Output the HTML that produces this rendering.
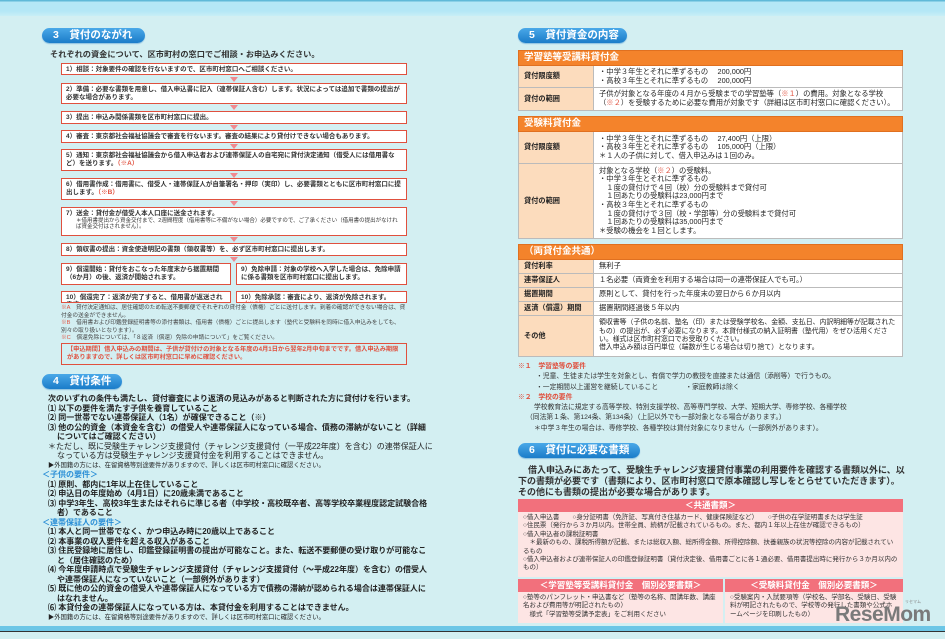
<!DOCTYPE html>
<html><head><meta charset="utf-8"><style>
*{margin:0;padding:0;box-sizing:border-box}
body{width:945px;height:639px;overflow:hidden;background:#d3eff2;font-family:"Liberation Sans","Noto Sans CJK JP",sans-serif;color:#222;position:relative}
.a{position:absolute}
.top{left:0;top:0;width:945px;height:16px;background:linear-gradient(#5fb9d8 0,#5fb9d8 1px,#b4e7f6 2px,#b4e7f6 11px,#c8eef6 16px)}
.bot{left:0;top:626px;width:945px;height:13px;background:linear-gradient(#6cc6e6 0,#6cc6e6 5px,#333 5px,#333 6px,#d3eff2 6px)}
.pill{height:15px;border-radius:8px;background:linear-gradient(#4aa8e8,#1a7cc9);color:#fff;font-weight:bold;font-size:10.5px;line-height:15px;padding-left:11px;box-shadow:0 1px 1px #8bbfe0}
.fb{left:61px;width:346px;border:1.3px solid #e0503e;background:#fff;font-size:6.5px;line-height:8px;padding:1.5px 4px;color:#333;font-weight:bold;overflow:hidden}
.arr{width:0;height:0;border-left:4px solid transparent;border-right:4px solid transparent;border-top:5px solid #f08a90;left:230px}
.r{color:#e0503e}
.note{font-size:5.7px;line-height:7.5px;color:#444;left:61px;width:346px}
.t{font-size:8px;line-height:9.5px;font-weight:bold;color:#222;left:48px;width:385px}
.t p{margin:0}
.ind{padding-left:9px;text-indent:-9px}
.bl{color:#2a8ed6}
table{border-collapse:collapse;position:absolute;left:518px;width:385px;table-layout:fixed;font-size:7.3px;line-height:8.6px;background:#fff}
td{border:1px solid #bbb;padding:1px 5px;vertical-align:middle;overflow:hidden}
th{background:#f4832b;color:#fff;text-align:left;font-size:9.5px;padding:0 5px;height:15px;border:1px solid #e07020}
td.l{background:#fcdcbd;font-weight:bold;font-size:7.2px}
.pk{background:#f2707c;color:#fff;font-weight:bold;text-align:center;font-size:8.5px;line-height:13px;height:13px;white-space:nowrap;overflow:hidden}
.pb{background:#fde5e4;font-size:6.5px;line-height:8.4px;color:#333;padding:2px 5px;overflow:hidden}
</style></head><body>
<div class="a top"></div>
<div class="a bot"></div>

<div class="a pill" style="left:42px;top:28px;width:103px">3　貸付のながれ</div>
<div class="a" style="left:50px;top:48px;font-size:8.2px;font-weight:bold;color:#333;white-space:nowrap">それぞれの資金について、区市町村の窓口でご相談・お申込みください。</div>

<div class="a fb" style="top:63px;height:12px;line-height:7.5px">1）相談：対象要件の確認を行ないますので、区市町村窓口へご相談ください。</div>
<div class="a arr" style="top:77px"></div>
<div class="a fb" style="top:83px;height:21px">2）準備：必要な書類を用意し、借入申込書に記入（連帯保証人含む）します。状況によっては追加で書類の提出が必要な場合があります。</div>
<div class="a arr" style="top:105px"></div>
<div class="a fb" style="top:111px;height:13px;line-height:8.5px">3）提出：申込み関係書類を区市町村窓口に提出。</div>
<div class="a arr" style="top:125px"></div>
<div class="a fb" style="top:130px;height:13px;line-height:8.5px">4）審査：東京都社会福祉協議会で審査を行ないます。審査の結果により貸付けできない場合もあります。</div>
<div class="a arr" style="top:144px"></div>
<div class="a fb" style="top:149px;height:22px">5）通知：東京都社会福祉協議会から借入申込者および連帯保証人の自宅宛に貸付決定通知（借受人には借用書など）を送ります。<span class="r">（※A）</span></div>
<div class="a arr" style="top:173px"></div>
<div class="a fb" style="top:178px;height:22px">6）借用書作成：借用書に、借受人・連帯保証人が自筆署名・押印（実印）し、必要書類とともに区市町村窓口に提出します。<span class="r">（※B）</span></div>
<div class="a arr" style="top:201px"></div>
<div class="a fb" style="top:207px;height:29px">7）送金：貸付金が借受人本人口座に送金されます。<br><span style="font-size:5.5px;font-weight:normal;padding-left:10px;display:block;line-height:6.8px">＊借用書提出から資金交付まで、2週間程度（借用書等に不備がない場合）必要ですので、ご了承ください（借用書の提出がなければ資金交付はされません）。</span></div>
<div class="a arr" style="top:237px"></div>
<div class="a fb" style="top:243px;height:13px;line-height:8.5px">8）領収書の提出：資金使途明記の書類（領収書等）を、必ず区市町村窓口に提出します。</div>
<div class="a arr" style="top:257px"></div>
<div class="a fb" style="top:263px;width:170px;height:22px">9）償還開始：貸付をおこなった年度末から据置期間（6か月）の後、返済が開始されます。</div>
<div class="a fb" style="left:236px;top:263px;width:171px;height:22px">9）免除申請：対象の学校へ入学した場合は、免除申請に係る書類を区市町村窓口に提出します。</div>
<div class="a fb" style="top:291px;width:170px;height:12px;line-height:7.5px">10）償還完了：返済が完了すると、借用書が返送されます。</div>
<div class="a fb" style="left:236px;top:291px;width:171px;height:12px;line-height:7.5px">10）免除承認：審査により、返済が免除されます。<span class="r">（※C）</span></div>

<div class="a note" style="top:305px"><span class="r">※A</span>　貸付決定通知は、居住確認のため転送不要郵便でそれぞれの貸付金（債権）ごとに送付します。到着の確認ができない場合は、貸付金の送金ができません。<br><span class="r">※B</span>　借用書および印鑑登録証明書等の添付書類は、借用書（債権）ごとに提出します（塾代と受験料を同時に借入申込みをしても、別々の取り扱いとなります）。<br><span class="r">※C</span>　償還免除については、「８返済（償還）免除の申請について」をご覧ください。</div>
<div class="a" style="left:61px;top:343px;width:346px;height:22px;border:1.3px solid #e0503e;color:#e0503e;font-size:6.2px;line-height:8px;font-weight:bold;padding:2px 5px;background:#d3eff2">【申込期間】借入申込みの期間は、子供が貸付けの対象となる年度の4月1日から翌年2月中旬までです。借入申込み期限がありますので、詳しくは区市町村窓口に早めに確認ください。</div>

<div class="a pill" style="left:42px;top:374px;width:80px">4　貸付条件</div>
<div class="a t" style="top:394px">
<p>次のいずれの条件も満たし、貸付審査により返済の見込みがあると判断された方に貸付けを行います。</p>
<p>⑴ 以下の要件を満たす子供を養育していること</p>
<p>⑵ 同一世帯でない連帯保証人（1名）が確保できること（※）</p>
<p class="ind">⑶ 他の公的資金（本資金を含む）の借受人や連帯保証人になっている場合、債務の滞納がないこと（詳細についてはご確認ください）</p>
<p class="ind" style="font-weight:normal">＊ただし、既に受験生チャレンジ支援貸付（チャレンジ支援貸付（一平成22年度）を含む）の連帯保証人になっている方は受験生チャレンジ支援貸付金を利用することはできません。</p>
<p style="font-weight:normal;font-size:6.3px">▶外国籍の方には、在留資格等別途要件がありますので、詳しくは区市町村窓口に確認ください。</p>
<p class="bl" style="margin-left:-6px">＜子供の要件＞</p>
<p>⑴ 原則、都内に1年以上在住していること</p>
<p>⑵ 申込日の年度始め（4月1日）に20歳未満であること</p>
<p class="ind">⑶ 中学3年生、高校3年生またはそれらに準じる者（中学校・高校既卒者、高等学校卒業程度認定試験合格者）であること</p>
<p class="bl" style="margin-left:-6px">＜連帯保証人の要件＞</p>
<p>⑴ 本人と同一世帯でなく、かつ申込み時に20歳以上であること</p>
<p>⑵ 本事業の収入要件を超える収入があること</p>
<p class="ind">⑶ 住民登録地に居住し、印鑑登録証明書の提出が可能なこと。また、転送不要郵便の受け取りが可能なこと（居住確認のため）</p>
<p class="ind">⑷ 今年度申請時点で受験生チャレンジ支援貸付（チャレンジ支援貸付（〜平成22年度）を含む）の借受人や連帯保証人になっていないこと（一部例外があります）</p>
<p class="ind">⑸ 既に他の公的資金の借受人や連帯保証人になっている方で債務の滞納が認められる場合は連帯保証人にはなれません。</p>
<p>⑹ 本貸付金の連帯保証人になっている方は、本貸付金を利用することはできません。</p>
<p style="font-weight:normal;font-size:6.3px">▶外国籍の方には、在留資格等別途要件がありますので、詳しくは区市町村窓口に確認ください。</p>
</div>

<div class="a pill" style="left:518px;top:28px;width:109px">5　貸付資金の内容</div>
<table style="top:50px">
<col style="width:75px"><col>
<tr><th colspan="2">学習塾等受講料貸付金</th></tr>
<tr style="height:22px"><td class="l">貸付限度額</td><td>・中学３年生とそれに準ずるもの　 200,000円<br>・高校３年生とそれに準ずるもの　 200,000円</td></tr>
<tr style="height:23px"><td class="l">貸付の範囲</td><td>子供が対象となる年度の４月から受験までの学習塾等（<span class="r">※１</span>）の費用。対象となる学校（<span class="r">※２</span>）を受験するために必要な費用が対象です（詳細は区市町村窓口に確認ください）。</td></tr>
</table>
<table style="top:116px">
<col style="width:75px"><col>
<tr><th colspan="2">受験料貸付金</th></tr>
<tr style="height:32px"><td class="l">貸付限度額</td><td>・中学３年生とそれに準ずるもの　 27,400円（上限）<br>・高校３年生とそれに準ずるもの　 105,000円（上限）<br>＊１人の子供に対して、借入申込みは１回のみ。</td></tr>
<tr style="height:75px"><td class="l">貸付の範囲</td><td>対象となる学校（<span class="r">※２</span>）の受験料。<br>・中学３年生とそれに準ずるもの<br>　１度の貸付けで４回（校）分の受験料まで貸付可<br>　１回あたりの受験料は23,000円まで<br>・高校３年生とそれに準ずるもの<br>　１度の貸付けで３回（校・学部等）分の受験料まで貸付可<br>　１回あたりの受験料は35,000円まで<br>＊受験の機会を１回とします。</td></tr>
</table>
<table style="top:244px">
<col style="width:75px"><col>
<tr><th colspan="2">（両貸付金共通）</th></tr>
<tr style="height:14px"><td class="l">貸付利率</td><td>無利子</td></tr>
<tr style="height:14px"><td class="l">連帯保証人</td><td>１名必要（両資金を利用する場合は同一の連帯保証人でも可。）</td></tr>
<tr style="height:14px"><td class="l">据置期間</td><td>原則として、貸付を行った年度末の翌日から６か月以内</td></tr>
<tr style="height:14px"><td class="l">返済（償還）期間</td><td>据置期間経過後５年以内</td></tr>
<tr style="height:41px"><td class="l">その他</td><td style="font-size:6.9px;line-height:8.4px">領収書等（子供の名前、塾名（印）または受験学校名、金額、支払日、内訳明細等が記載されたもの）の提出が、必ず必要になります。本貸付様式の納入証明書（塾代用）をぜひ活用ください。様式は区市町村窓口でお受取りください。<br>借入申込み額は百円単位（端数が生じる場合は切り捨て）となります。</td></tr>
</table>

<div class="a" style="left:518px;top:362px;width:390px;font-size:6.8px;line-height:10.3px;color:#333">
<div class="r" style="font-weight:bold">※１　学習塾等の要件</div>
<div style="padding-left:18px">・児童、生徒または学生を対象とし、有償で学力の教授を直接または通信（添削等）で行うもの。</div>
<div style="padding-left:18px">・一定期間以上運営を継続していること　　　　・家庭教師は除く</div>
<div class="r" style="font-weight:bold">※２　学校の要件</div>
<div style="padding-left:16px">学校教育法に規定する高等学校、特別支援学校、高等専門学校、大学、短期大学、専修学校、各種学校</div>
<div style="padding-left:8px">（同法第１条、第124条、第134条）（上記以外でも一部対象となる場合があります。）</div>
<div style="padding-left:16px">＊中学３年生の場合は、専修学校、各種学校は貸付対象になりません（一部例外があります）。</div>
</div>

<div class="a pill" style="left:518px;top:443px;width:122px">6　貸付に必要な書類</div>
<div class="a" style="left:518px;top:465px;width:387px;font-size:9px;line-height:11px;font-weight:bold;color:#333;text-indent:10px">借入申込みにあたって、受験生チャレンジ支援貸付事業の利用要件を確認する書類以外に、以下の書類が必要です（書類により、区市町村窓口で原本確認し写しをとらせていただきます）。その他にも書類の提出が必要な場合があります。</div>
<div class="a" style="left:518px;top:499px;width:385px">
<div class="pk">＜共通書類＞</div>
<div class="pb" style="height:65px">○借入申込書　　○身分証明書（免許証、写真付き住基カード、健康保険証など）　　○子供の在学証明書または学生証<br>○住民票（発行から３か月以内。世帯全員、続柄が記載されているもの。また、都内１年以上在住が確認できるもの）<br>○借入申込者の課税証明書<br>　＊最新のもの、課税所得額が記載、または総収入額、総所得金額、所得控除額、扶養親族の状況等控除の内容が記載されているもの<br>○借入申込者および連帯保証人の印鑑登録証明書（貸付決定後、借用書ごとに各１通必要、借用書提出時に発行から３か月以内のもの）</div>
</div>
<div class="a" style="left:518px;top:579px;width:205px">
<div class="pk">＜学習塾等受講料貸付金　個別必要書類＞</div>
<div class="pb" style="height:31px">○塾等のパンフレット・申込書など（塾等の名称、開講年数、講座名および費用等が明記されたもの）<br>　様式「学習塾等受講予定表」をご利用ください</div>
</div>
<div class="a" style="left:725px;top:579px;width:178px">
<div class="pk">＜受験料貸付金　個別必要書類＞</div>
<div class="pb" style="height:31px">○受験案内・入試要項等（学校名、学部名、受験日、受験料が明記されたもので、学校等の発行した書類や公式ホームページを印刷したもの）</div>
</div>
<div class="a" style="left:835px;top:603px;font-size:21px;font-weight:bold;color:#7a7a7a;letter-spacing:-0.5px;font-family:'Liberation Sans',sans-serif">ReseMom</div>
<div class="a" style="left:905px;top:599px;font-size:4px;color:#888">リセマム</div>
</body></html>
